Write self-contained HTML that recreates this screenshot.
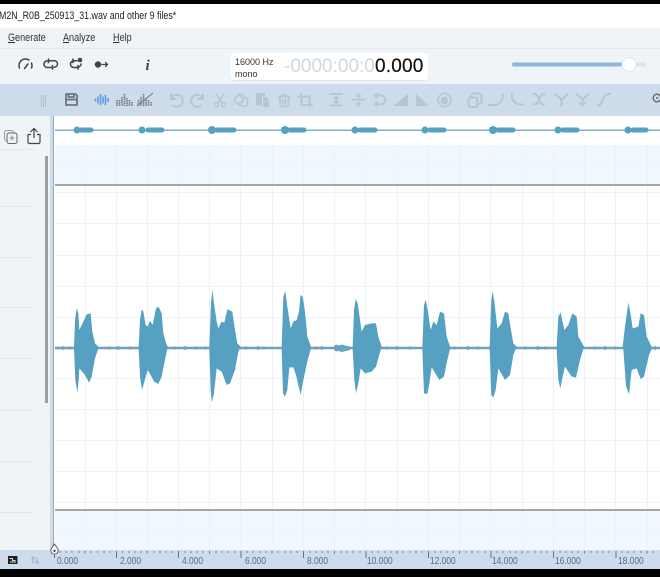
<!DOCTYPE html>
<html><head><meta charset="utf-8"><style>
html,body{margin:0;padding:0;background:#000}
#r{position:relative;width:660px;height:577px;overflow:hidden;background:#000;font-family:"Liberation Sans",sans-serif}
#r>div{position:absolute}
.t{position:absolute;white-space:nowrap}
.m{font-size:10.800px;color:#333;top:31.500px;transform:scaleX(.84);transform-origin:left}
.m u{text-decoration:underline}
.tk{font-size:10.500px;color:#5a6a80;top:554.500px;transform:scaleX(.8);transform-origin:left}
</style></head><body><div id="r">
<div style="left:0;top:4px;width:660px;height:24px;background:#fff"></div>
<div class="t" style="left:-1px;top:10px;font-size:11px;color:#222;transform:scaleX(.805);transform-origin:left">M2N_R0B_250913_31.wav and other 9 files*</div>
<div style="left:0;top:28px;width:660px;height:20px;background:#eef3f8;border-bottom:1px solid #e2e9f1"></div>
<div class="t m" style="left:8px"><u>G</u>enerate</div>
<div class="t m" style="left:63px"><u>A</u>nalyze</div>
<div class="t m" style="left:113px"><u>H</u>elp</div>
<div style="left:0;top:49px;width:660px;height:35px;background:#eff4f9"></div>
<div style="left:0;top:84px;width:660px;height:32px;background:#cddbeb"></div>
<div style="left:0;top:116px;width:50px;height:434px;background:#eff4f9"></div>
<div style="left:50px;top:116px;width:4px;height:434px;background:#cddbeb"></div>
<div style="left:0;top:550px;width:660px;height:19px;background:#cddbeb"></div>
<div style="left:53px;top:116px;width:606px;height:434px;background:#fff;border-left:1px solid #9aa"></div>
<div style="left:231px;top:53px;width:197px;height:27px;background:#fff;border-radius:3px;box-shadow:0 1px 0 #e3e7ec"></div>
<div class="t" style="left:235px;top:56px;font-size:9px;line-height:12px;color:#333">16000 Hz<br>mono</div>
<div class="t" style="left:284px;top:55px;font-size:19px;line-height:24px;color:#d4d6d8">-0000:00:0</div>
<div class="t" style="left:375px;top:55px;font-size:19px;line-height:24px;color:#111;letter-spacing:.2px;-webkit-text-stroke:.2px #111">0.000</div>
<svg style="position:absolute;left:0;top:0" width="660" height="577" viewBox="0 0 660 577" fill="none">
<rect x="55" y="145" width="605" height="40" fill="#f0f7fe"/>
<rect x="55" y="511" width="605" height="39" fill="#f0f7fe"/>
<g stroke="#eef1f5" stroke-width="1">
<path d="M85.500 145V550M116.500 145V550M147.500 145V550M178.500 145V550M209.500 145V550M240.500 145V550M272.500 145V550M303.500 145V550M334.500 145V550M365.500 145V550M397.500 145V550M428.500 145V550M459.500 145V550M490.500 145V550M522.500 145V550M553.500 145V550M584.500 145V550M615.500 145V550M647.500 145V550"/>
<path d="M55 162.500H660M55 192.500H660M55 223.500H660M55 255.500H660M55 286.500H660M55 317.500H660M55 378.500H660M55 409.500H660M55 440.500H660M55 471.500H660M55 502.500H660M55 533.500H660"/>
</g>
<rect x="55" y="184" width="605" height="2" fill="#a3a5a8"/>
<rect x="55" y="509" width="605" height="2" fill="#a3a5a8"/>
<!-- overview -->
<rect x="55" y="129.500" width="605" height="1.500" fill="#7db3c8"/>
<g stroke="#56a0c2" stroke-width="5" stroke-linecap="round">
<path d="M81 130H91M148 130H162M217 130H234M290 130H304M360 130H375M430 130H444M498 130H513M563 130H577M633 130H646"/>
</g>
<g fill="#56a0c2">
<circle cx="77" cy="130" r="3.500"/><circle cx="142" cy="130" r="3.500"/><circle cx="212" cy="130" r="4"/><circle cx="285" cy="130" r="4"/><circle cx="355" cy="130" r="3.500"/><circle cx="425" cy="130" r="3.500"/><circle cx="493" cy="130" r="4"/><circle cx="558" cy="130" r="3.500"/><circle cx="628" cy="130" r="3.500"/>
</g>
<!-- center noise -->
<path d="M55 348H660" stroke="#64a6c6" stroke-width="2.400"/>
<path d="M58 346.500v3M63 346.300v3.400M70 346.500v3M109 346.500v3M118 346.300v3.400M130 346.500v3M175 346.500v3M185 346.300v3.400M196 346.500v3M205 346.500v3M246 346.500v3M258 346.300v3.400M264 346.500v3M316 346.500v3M322 346.300v3.400M387 346.500v3M397 346.300v3.400M410 346.500v3M455 346.500v3M468 346.300v3.400M478 346.500v3M490 346.500v3M525 346.500v3M538 346.300v3.400M545 346.500v3M595 346.500v3M605 346.300v3.400M615 346.500v3M655 346.300v3.400" stroke="#64a6c6" stroke-width="2.500"/>
<path d="M334 346L336 344.500 339 345.500 342 344.500 345 345.500 350 346.500V350L346 351 342 352 338 351 336 351.500 334 350Z" fill="#64a6c6"/>
<g fill="#56a0c2">
<g transform="translate(50 280) scale(.33333)">
<path d="M72 200L75 120 80 85 85 100 88 150 100 125 110 103 122 100 127 155 135 190 145 200 145 205 135 235 125 290 117 308 105 285 88 265 87 290 82 338 76 300 72 205Z"/>
<path d="M266 200L270 120 275 88 280 95 287 135 293 140 300 122 308 135 318 85 325 80 335 100 340 160 350 195 355 202 352 205 345 240 335 290 325 312 312 305 302 285 293 270 283 305 276 330 270 290 266 207Z"/>
<path d="M478 200L483 70 487 28 492 70 500 125 505 145 515 125 523 128 532 88 547 95 555 150 562 190 572 200 570 205 565 215 555 270 540 310 530 315 515 275 500 265 492 340 485 367 482 330 478 207Z"/>
</g>
<g transform="translate(250 280) scale(.33333)">
<path d="M95 200L100 50 106 33 112 80 122 145 130 125 140 120 147 95 152 45 158 50 165 95 172 170 182 197 182 207 172 245 160 300 152 345 138 285 130 262 118 262 112 330 105 350 99 340 95 207Z"/>
<path d="M308 200L312 90 317 57 323 70 335 155 345 135 365 130 378 130 385 170 395 200 392 210 378 260 365 275 345 280 332 265 325 310 318 340 313 300 308 207Z"/>
<path d="M517 200L522 75 527 60 533 90 542 150 550 125 560 135 570 95 582 100 590 170 600 200 600 207 592 240 582 290 568 300 556 280 545 262 538 310 532 342 522 340 517 207Z"/>
</g>
<g transform="translate(450 280) scale(.33333)">
<path d="M119 200L124 60 128 33 133 65 142 145 155 130 165 95 175 100 183 150 190 190 200 200 197 207 190 225 180 285 165 300 145 265 137 330 130 353 124 345 119 207Z"/>
<path d="M320 200L325 110 332 98 343 150 355 135 367 100 380 110 385 170 402 200 400 207 390 240 378 293 365 290 345 260 338 290 331 325 325 300 320 207Z"/>
<path d="M518 200L525 140 535 67 543 110 548 145 565 140 572 100 582 105 590 170 605 200 605 207 597 225 582 290 572 297 560 265 545 270 537 343 528 318 520 207Z"/>
</g>
</g>
<path d="M55 348.200H72M100 348.200H138M168 348.200H209M240 348.200H282M312 348.200H353M383 348.200H423M454 348.200H490M518 348.200H556M586 348.200H625M652 348.200H660" stroke="#a08f95" stroke-width=".6"/>
<!-- left panel -->
<path d="M0 149.500H33M0 206.500H33M0 257.500H33M0 307.500H33M0 358.500H33M0 410.500H33M0 461.500H33M0 512.500H33" stroke="#e2e7ed"/>
<rect x="45" y="156" width="3" height="247" fill="#9a9da1"/>
<g stroke="#666" stroke-width="1" stroke-linejoin="round">
<rect x="4.500" y="130.500" width="9" height="10" rx="2" stroke="#999"/>
<rect x="7" y="133" width="10" height="10.500" rx="2" fill="#eff4f9"/>
<path d="M12 135.500v5M9.500 138h5" stroke="#888"/>
</g>
<path d="M28 134.500v7.500a1.500 1.500 0 0 0 1.500 1.500h9a1.500 1.500 0 0 0 1.500-1.500v-7.500h-3M31 134.500h-3M34 138v-9M30.500 132l3.500-3.500 3.500 3.500" stroke="#444" stroke-width="1.200"/>
<!-- main toolbar -->
<g stroke="#444" stroke-width="1.500" stroke-linecap="round">
<path d="M19.500 68a6.500 6.500 0 0 1 9.500-8M31.500 63a6.500 6.500 0 0 1 0 5M24.500 68.500l3.500-4.500"/>
<path d="M48 60.700h6a3.200 3.200 0 0 1 .5 6.500M53 67.500h-5.500a3.300 3.300 0 0 1-.5-6.600M52.500 65.500v3.500M48.500 59v3.500"/>
<path d="M73 60.700h4M78.500 67.500h-4.500a3.300 3.300 0 0 1-.5-6.600M78 67a3 3 0 0 0 3-3M78 65.500v3.500M73 59v3.500"/>
<path d="M102 64.500h5.500M105.500 62.500l2 2-2 2" stroke-width="1.300"/>
</g>
<circle cx="80" cy="60" r="2.300" fill="#444"/>
<circle cx="98" cy="64.500" r="3.200" fill="#444"/>
<text x="145.500" y="70" font-family="Liberation Serif,serif" font-size="15" font-weight="bold" font-style="italic" fill="#444">i</text>
<!-- slider -->
<rect x="512" y="62.500" width="134" height="4" rx="2" fill="#dfe2e6"/>
<rect x="512" y="62.500" width="114" height="4" rx="2" fill="#8fb6dc"/>
<circle cx="629" cy="64.500" r="7" fill="#fff" stroke="#e2e6ea"/>
<!-- toolbar 2 -->
<path d="M41.500 95v12M43.500 95v12M45.500 95v12" stroke="#b4c1cf"/>
<path d="M66 94h9.500l1.500 1.500V105H66zM68.500 94v3h5.500v-3M66 99.500h11" stroke="#6d7680" stroke-width="1.800" stroke-linejoin="round"/>
<path d="M95.500 98.500v3M98 96.500v7M100.500 94v11M103 96.500v7M105.500 95v10M108 98v4" stroke="#5c9ae8" stroke-width="1.600"/>
<path d="M117 100v6M119.500 100v6M122 97v9M124.500 94v12M127 98v8M129.500 100v6M132 102v4" stroke="#6d7680" stroke-width="1.600" stroke-dasharray="1.500 .7"/>
<path d="M138.500 100v6M141 97v9M143.500 94v12M146 98v8M148.500 100v6M151 102v4" stroke="#6d7680" stroke-width="1.500" stroke-dasharray="1.500 .6"/>
<path d="M137 106l16-13" stroke="#6d7680"/>
<g stroke="#b7c5d4" stroke-width="2" stroke-linecap="round" stroke-linejoin="round">
<path d="M171 94.500v4.500h4.500M171.500 98a6 6 0 1 1 1.500 7.500"/>
<path d="M203 94.500v4.500h-4.500M202.500 98a6 6 0 1 0-1.500 7.500"/>
<path d="M216 94l5.500 8M224 94l-5.500 8" stroke-width="1.600"/>
<circle cx="216.500" cy="104.500" r="2" stroke-width="1.500"/><circle cx="223.500" cy="104.500" r="2" stroke-width="1.500"/>
<path d="M238 94.500h4a2 2 0 0 1 2 2v1.500h1.500a2 2 0 0 1 2 2v4a2 2 0 0 1-2 2H241.500a2 2 0 0 1-2-2v-1.500" stroke-width="1.600"/>
<rect x="235" y="96" width="7.500" height="7.500" rx="2" transform="rotate(45 238.700 99.700)" stroke-width="1.600"/>
<path d="M278.500 96.500h11.500M282 96v-1.500h4.500V96M280 96.500v8a2 2 0 0 0 2 2h4.500a2 2 0 0 0 2-2v-8M283 99.500v4.500M285.500 99.500v4.500" stroke-width="1.600"/>
<path d="M301.500 93.500v11.500h10.500M298 96.500h11.500v10.500" stroke-width="1.900"/>
<path d="M330.500 94h11.500M330.500 105.500h11.500M336.200 96.500v6.500M334.200 98.300l2-2 2 2M334.200 101.200l2 2 2-2" stroke-width="1.700"/>
<path d="M352.500 99.700h12M358.500 93.500v3M356.800 95.300l1.700 1.700 1.700-1.700M358.500 106v-3M356.800 104.200l1.700-1.700 1.700 1.700" stroke-width="1.600"/>
<path d="M375 95.500h6a4.300 4.300 0 0 1 0 8.600h-6M377 93.500l-2.500 2 2.500 2M377 102l-2.500 2.100 2.500 2" stroke-width="1.700"/>
<rect x="468.500" y="97.500" width="9" height="9.500" rx="2.500"/>
<path d="M471.500 97v-1a2.500 2.500 0 0 1 2.500-2.500h5a2.500 2.500 0 0 1 2.500 2.500v5.500a2.500 2.500 0 0 1-2.500 2.500h-1.500"/>
<path d="M489 105h3.500a9 9 0 0 0 10-11"/>
<path d="M512 94a9 9 0 0 0 8 10.500h3.500"/>
<path d="M533.500 94c3.500 0 4.500 2 5.500 5.500s2 5 5 5M544.500 94c-3 0-4.500 2-5.500 5.500s-2 5-5.500 5"/>
<path d="M555.500 94l6 6 6-6M561.500 100v6"/>
<path d="M576.500 94l6 5.500 6-5.500M582.500 99.500v6M580 103l2.500 2.500 2.500-2.500"/>
<path d="M597.500 105.500c3 0 4-2.500 5-5.500s3-6 7.500-6"/>
</g>
<g fill="#b7c5d4">
<path d="M256 93h9v3h-3v9.500h-6z"/><path d="M263 97h3.500l2.500 2.500v7.500h-6z"/>
<path d="M393 106l15-12v12z"/>
<path d="M416 94v12h13z"/>
</g>
<circle cx="444.500" cy="100" r="6.500" stroke="#b7c5d4" stroke-width="1.600"/><circle cx="444.500" cy="100.500" r="3.800" fill="#b7c5d4"/>
<circle cx="657" cy="98" r="3.800" stroke="#666" stroke-width="1.400"/><circle cx="657" cy="98" r="1" fill="#666"/>
<!-- bottom bar -->
<rect x="8" y="556" width="9.500" height="8" fill="#222"/>
<path d="M9.500 558.500h3v2h3M10 562h6" stroke="#ddd" stroke-width="1"/>
<path d="M33 557v6.500M31.500 559l1.500-2 1.500 2M37 557v6.500M35.500 561.500l1.500 2 1.500-2" stroke="#a8b5c4" stroke-width="1.200"/>
<!-- ruler -->
<path d="M85 551v2.500M116.500 551v7M147 551v2.500M178.500 551v7M209.500 551v2.500M241 551v7M272 551v2.500M303.500 551v7M334.500 551v2.500M366 551v7M397 551v2.500M428.500 551v7M459.500 551v2.500M491 551v7M522 551v2.500M553.500 551v7M584.500 551v2.500M616 551v7M647 551v2.500" stroke="#5e7690" stroke-width="1"/>
<path d="M60 551v2M66 551v2M72 551v2M79 551v2M91 551v2M97.500 551v2M104 551v2M110 551v2M122.500 551v2M129 551v2M135 551v2M141 551v2M154 551v2M160 551v2M166 551v2M172 551v2M185 551v2M191 551v2M197 551v2M203 551v2M216 551v2M222 551v2M228 551v2M235 551v2M247 551v2M253 551v2M260 551v2M266 551v2M278 551v2M285 551v2M291 551v2M297 551v2M310 551v2M316 551v2M322 551v2M328 551v2M341 551v2M347 551v2M353 551v2M360 551v2M372 551v2M378 551v2M385 551v2M391 551v2M403 551v2M410 551v2M416 551v2M422 551v2M435 551v2M441 551v2M447 551v2M453 551v2M466 551v2M472 551v2M478 551v2M485 551v2M497 551v2M503 551v2M510 551v2M516 551v2M528 551v2M535 551v2M541 551v2M547 551v2M560 551v2M566 551v2M572 551v2M578 551v2M591 551v2M597 551v2M603 551v2M609 551v2M622 551v2M628 551v2M634 551v2M641 551v2M653 551v2" stroke="#6d8299" stroke-width=".9"/>
<path d="M54.500 544c-2 2.500-3.700 4.500-3.700 6.500a3.700 3.700 0 0 0 7.400 0c0-2-1.700-4-3.700-6.500z" fill="#fff" stroke="#555" stroke-width=".9"/>
<circle cx="54.500" cy="550.800" r="1.100" fill="#222"/>
<path d="M54.500 555v3" stroke="#5e7690"/>
</svg>
<div class="t tk" style="left:57px">0.000</div>
<div class="t tk" style="left:119.500px">2.000</div>
<div class="t tk" style="left:182px">4.000</div>
<div class="t tk" style="left:244.500px">6.000</div>
<div class="t tk" style="left:307px">8.000</div>
<div class="t tk" style="left:367px">10.000</div>
<div class="t tk" style="left:429.500px">12.000</div>
<div class="t tk" style="left:492px">14.000</div>
<div class="t tk" style="left:555px">16.000</div>
<div class="t tk" style="left:618px">18.000</div>
</div></body></html>
